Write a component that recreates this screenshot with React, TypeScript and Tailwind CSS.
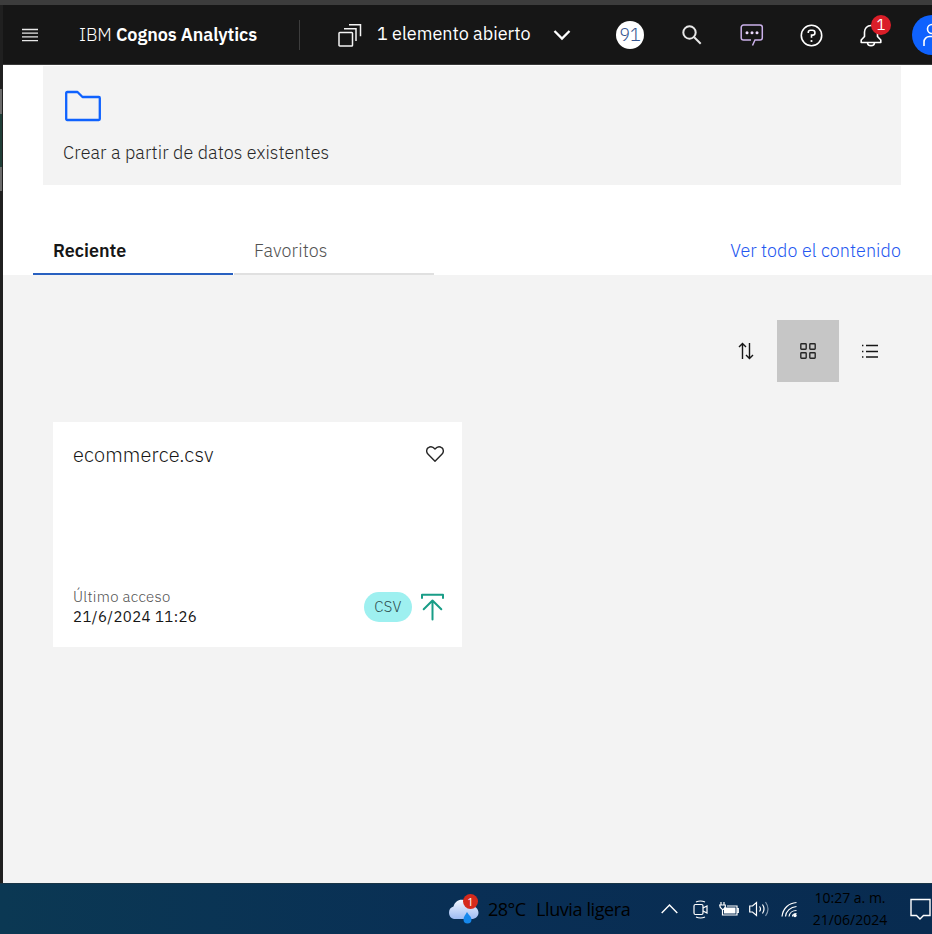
import React from "react";

const PLEX = "font-['IBM_Plex_Sans',Roboto,sans-serif]";
const SEGOE = "font-['Segoe_UI','Open_Sans',sans-serif]";

function Header() {
  return (
    <header className="flex h-[60px] shrink-0 items-center overflow-hidden border-b border-[#393939] bg-[#161616] text-white">
      <svg className="ml-[19px] shrink-0" width="16" height="14" viewBox="0 0 16 14" stroke="#e8e8e8" strokeWidth="1.3">
        <path d="M0 1.5h16M0 5.2h16M0 8.9h16M0 12.6h16" />
      </svg>
      <div className="ml-[41px] w-[179px] shrink-0 whitespace-nowrap text-[18px] leading-6 tracking-[-0.09px]">
        <span className="font-light">IBM</span> <span className="font-semibold">Cognos Analytics</span>
      </div>
      <div className="ml-[41px] h-[30px] w-px shrink-0 bg-[#3d3d3d]" />
      <svg className="ml-[38px] mt-[2px] shrink-0" width="24" height="24" viewBox="0 0 24 24" fill="none" stroke="#f4f4f4" strokeWidth="1.5">
        <rect x="1" y="8.5" width="13.5" height="13.5" rx="0.8" />
        <path d="M6 4.700h12V17M11 0.800h11.500V12.200" />
      </svg>
      <div className="mb-[2px] ml-[15px] w-[154px] shrink-0 whitespace-nowrap text-[18px] leading-6">1 elemento abierto</div>
      <svg className="ml-[22px] mt-px shrink-0" width="18" height="12" viewBox="0 0 18 12" fill="none" stroke="#fff" strokeWidth="2.3">
        <path d="m1.5 2 7.5 7.5L16.500 2" />
      </svg>
      <div className="ml-[45px] flex size-7 shrink-0 items-center justify-center rounded-full bg-white text-[18px] font-light leading-none text-[#35558f]">91</div>
      <svg className="ml-[38px] mt-px shrink-0" width="20" height="20" viewBox="0 0 20 20" fill="none" stroke="#e8e8e8" strokeWidth="2">
        <circle cx="7.500" cy="7.500" r="6.200" />
        <path d="m12.200 12.200 6.500 6.500" />
      </svg>
      <svg className="ml-[38px] shrink-0" width="24" height="24" viewBox="0 0 24 24" fill="none" stroke="#cbb1ea" strokeWidth="1.500">
        <path d="M12.500 22.500 15 17h5a2.300 2.300 0 0 0 2.300-2.300V4.300A2.300 2.300 0 0 0 20 2H3.500a2.300 2.300 0 0 0-2.300 2.300v10.400A2.300 2.300 0 0 0 3.500 17h7.500" />
        <g fill="#ead8fc" stroke="none"><circle cx="7" cy="9.700" r="1.500" /><circle cx="12" cy="9.700" r="1.500" /><circle cx="17" cy="9.700" r="1.500" /></g>
      </svg>
      <svg className="ml-[36px] mt-px shrink-0" width="23" height="23" viewBox="0 0 23 23" fill="none" stroke="#fff" strokeWidth="1.600">
        <circle cx="11.500" cy="11.500" r="10.200" />
        <path d="M8.300 9V8.300A2.200 2.200 0 0 1 10.500 6.200h2a2.400 2.400 0 0 1 0 4.900h-1v2.700" />
        <circle cx="11.500" cy="17" r="1.100" fill="#fff" stroke="none" />
      </svg>
      <div className="relative ml-[37px] h-[24px] w-[22px] shrink-0">
        <svg width="22" height="24" viewBox="0 0 22 24" fill="none" stroke="#fff" strokeWidth="1.600" strokeLinejoin="round">
          <path d="M11 2.500c-4 0-6.500 3-6.500 6.500v4.500L1.200 17v2.500h19.600V17l-3.300-3.500V9c0-3.500-2.500-6.500-6.500-6.500ZM7.500 19.500c0 4.200 7 4.200 7 0" />
        </svg>
        <span className="absolute left-[11px] top-[-8px] flex size-5 items-center justify-center rounded-full bg-[#da1e28] text-[15px] leading-none">1</span>
      </div>
      <div className="ml-[30px] flex size-10 shrink-0 items-center justify-center rounded-full bg-[#0f62fe]">
        <svg width="20" height="24" viewBox="0 0 20 24" fill="none" stroke="#fff" strokeWidth="1.600">
          <circle cx="10" cy="6" r="4.500" />
          <path d="M2 23v-4a5.500 5.500 0 0 1 5.500-5.500h5A5.500 5.500 0 0 1 18 19v4" />
        </svg>
      </div>
    </header>
  );
}

function FileCard() {
  return (
    <article className="ml-[50px] mt-10 flex h-[225px] w-[409px] flex-col justify-between bg-white pb-[20px] pl-5 pr-[18px] pt-[21px]">
      <div className="flex items-start justify-between">
        <h2 className="whitespace-nowrap text-[20px] font-light leading-6 tracking-[0.17px] text-[#161616]">ecommerce.csv</h2>
        <svg className="mt-[2px]" width="18" height="18" viewBox="0 0 18 18" fill="none" stroke="#262626" strokeWidth="1.400" strokeLinejoin="round">
          <path d="M9 16.300 1.900 9.100C-.1 7 .5 3.900 2.300 2.700 4.500 1.100 7 1.700 9 4c2-2.300 4.500-2.900 6.700-1.300 1.800 1.200 2.400 4.300.4 6.400Z" />
        </svg>
      </div>
      <div className="flex items-center">
        <div className="w-[291px] whitespace-nowrap text-[15px] leading-5">
          <p className="font-light tracking-[0.3px] text-[#525252]">Último acceso</p>
          <p className="tracking-[0.39px] text-[#161616]">21/6/2024 11:26</p>
        </div>
        <span className="flex h-[30px] w-12 items-center justify-center rounded-full bg-[#9ef0f0] text-[15px] font-light tracking-[0.3px] text-[#2d4d4d]">CSV</span>
        <svg className="ml-[9px]" width="23" height="28" viewBox="0 0 23 28" fill="none" stroke="#199d87" strokeWidth="2" strokeLinecap="round" strokeLinejoin="round">
          <path d="M1 5V1.700h21V5M11.500 26.500V8M2.700 16.300 11.500 7.500l8.800 8.800" />
        </svg>
      </div>
    </article>
  );
}

function Content() {
  return (
    <main className={`flex min-w-0 flex-1 flex-col overflow-hidden bg-white ${PLEX}`}>
      <Header />
      <section className="ml-10 mr-[31px] mt-px h-[119px] shrink-0 bg-[#f3f3f3] pl-[20px] pt-[24px] text-[#262626]">
        <svg className="ml-[2px]" width="36" height="32" viewBox="0 0 36 32" fill="none" stroke="#0f62fe" strokeWidth="2.300" strokeLinejoin="round">
          <path d="M2.500 2H12.500l5 5H33.800a1 1 0 0 1 1 1v21a1 1 0 0 1-1 1H2.200a1 1 0 0 1-1-1V3a1 1 0 0 1 1.300-1Z" />
        </svg>
        <p className="mt-[19px] whitespace-nowrap text-[18px] font-light leading-6 tracking-[0.09px]">Crear a partir de datos existentes</p>
      </section>
      <nav className="ml-[30px] mr-[31px] mt-[42px] flex h-12 shrink-0 text-[18px] leading-6">
        <div className="w-[200px] border-b-2 border-[#2860c0] pl-[20px] pt-[12px] font-semibold text-[#161616]">Reciente</div>
        <div className="ml-px w-[200px] border-b-2 border-[#e0e0e0] pl-[20px] pt-[12px] font-light tracking-[0.15px] text-[#525252]">Favoritos</div>
        <div className="ml-auto whitespace-nowrap pt-[12px] font-light tracking-[0.08px] text-[#2457f0]">Ver todo el contenido</div>
      </nav>
      <section className="flex-1 bg-[#f3f3f3] pt-[45px]">
        <div className="flex h-[62px] justify-end pr-[31px]">
          <div className="flex w-[62px] items-center justify-center">
            <svg width="16" height="18" viewBox="0 0 16 18" fill="none" stroke="#161616" strokeWidth="1.400"><path d="M4.500 17V1.500M1 5l3.500-3.500L8 5M11.500 1v15.500M8 13l3.500 3.500L15 13" /></svg>
          </div>
          <div className="flex w-[62px] items-center justify-center bg-[#c6c6c6]">
            <svg width="16" height="16" viewBox="0 0 16 16" fill="none" stroke="#262626" strokeWidth="1.400"><rect x=".8" y=".8" width="5.400" height="5.400" rx=".7" /><rect x="9.800" y=".8" width="5.400" height="5.400" rx=".7" /><rect x=".8" y="9.800" width="5.400" height="5.400" rx=".7" /><rect x="9.800" y="9.800" width="5.400" height="5.400" rx=".7" /></svg>
          </div>
          <div className="flex w-[62px] items-center justify-center">
            <svg width="16" height="16" viewBox="0 0 16 16" stroke="#161616" strokeWidth="1.300"><path d="M4 2.500h12M4 8.500h12M4 14h12M0 2.500h1.400M0 8.500h1.400M0 14h1.400" /></svg>
          </div>
        </div>
        <FileCard />
      </section>
    </main>
  );
}

function Taskbar() {
  return (
    <footer className={`flex h-[51px] shrink-0 items-center overflow-hidden border-t border-[#193546] bg-gradient-to-r from-[#0b3853] via-[#092f55] to-[#082b50] text-black ${SEGOE}`}>
      <div className="relative ml-[447px] h-[30px] w-[32px] shrink-0">
        <svg width="32" height="30" viewBox="0 0 32 30">
          <defs><linearGradient id="cloud" x1="0" y1="0" x2="0" y2="1"><stop stopColor="#f4f7ff" /><stop offset="1" stopColor="#9dbbf3" /></linearGradient></defs>
          <path d="M7 25a6.500 6.500 0 0 1-.5-12.500C8 7.500 12 5 16.500 6c4 .5 6.500 3 7.500 6 4 0 7.500 2.700 7.500 6.700 0 3.500-3 6.300-7 6.300Z" fill="url(#cloud)" />
          <path d="M20 18c-1.500 3-3.500 4.500-3.500 7.500a4 4 0 0 0 8 0C24.500 22.500 21.500 21 20 18Z" fill="#1688ec" />
        </svg>
        <span className="absolute left-[16px] top-[0px] flex size-[15px] items-center justify-center rounded-full bg-[#d52a1c] text-[11px] leading-none text-white">1</span>
      </div>
      <div className="ml-[9px] w-[48px] shrink-0 whitespace-nowrap text-[18px] leading-6 tracking-[-0.5px]">28°C</div>
      <div className="w-[95px] shrink-0 whitespace-nowrap text-[18px] leading-6 tracking-[-0.4px]">Lluvia ligera</div>
      <svg className="ml-[30px] shrink-0" width="17" height="10" viewBox="0 0 17 10" fill="none" stroke="#fff" strokeWidth="1.400"><path d="m.7 9 7.800-8 7.800 8" /></svg>
      <svg className="ml-[15px] shrink-0" width="15" height="19" viewBox="0 0 15 19" fill="none" stroke="#fff" strokeWidth="1.200"><rect x="1" y="4.500" width="9" height="10" rx="1.500" /><path d="m10 8 4-2v7l-4-2M3 2q4.500-2 9 0M3 17q4.500 2 9 0" /></svg>
      <svg className="ml-[11px] shrink-0" width="20" height="15" viewBox="0 0 20 15" fill="none" stroke="#fff" strokeWidth="1.200"><path d="M2 0v3M5 0v3M.7 3h5.600v2.500l-2 2h-1l-2-2ZM3.500 7.500V13H18V4H8M18 6.500h1.300v4H18" /><path d="M5 5.500h11.500v6H5Z" fill="#fff" stroke="none" /></svg>
      <svg className="ml-[10px] shrink-0" width="20" height="18" viewBox="0 0 20 18" fill="none" stroke="#fff" strokeWidth="1.200"><path d="M.7 6h2.800L7.500 2.500v13L3.500 12H.7ZM10.500 6.500q2 2.500 0 5M13.500 4.500q3 4.500 0 9" /><path d="M16.500 2q5 7 0 14" stroke="#8095aa" /></svg>
      <svg className="ml-[12px] shrink-0" width="17" height="17" viewBox="0 0 17 17" fill="none" stroke="#fff" strokeWidth="1.200"><path d="M1 15.500C2 7 8 2 15.500 1.500M4.500 15.500C5 10 9.500 6 15.500 5.500M8 15.500c.5-3.500 3.500-6 7.500-6M11.500 15.500c0-1.500 1.500-3 4-3" /><circle cx="14" cy="14.500" r="1.700" fill="#fff" stroke="none" /></svg>
      <div className="ml-[12px] w-[80px] shrink-0 whitespace-nowrap text-center text-[14px] leading-[22px]">
        <p>10:27 a. m.</p>
        <p>21/06/2024</p>
      </div>
      <svg className="ml-[20px] shrink-0" width="21" height="22" viewBox="0 0 21 22" fill="none" stroke="#fff" strokeWidth="1.400"><path d="M1 1.500h19v16h-6.500L10 21l-3.500-3.500H1Z" /></svg>
    </footer>
  );
}

export default function App() {
  return (
    <div className="flex h-[934px] w-[932px] flex-col overflow-hidden">
      <div className="h-[5px] shrink-0 bg-[#3c3c3c]" />
      <div className="flex h-[878px] shrink-0">
        <div className="w-[3px] shrink-0 bg-[#202020]">
          <div className="mt-[84px] h-[25px] w-[2px] bg-[#6b6b6b]" />
          <div className="h-[53px] w-[2px] bg-[#203e37]" />
          <div className="h-[24px] w-[2px] bg-[#6b6b6b]" />
        </div>
        <Content />
      </div>
      <Taskbar />
    </div>
  );
}
